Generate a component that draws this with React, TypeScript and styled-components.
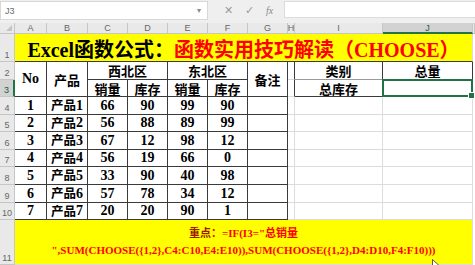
import React from "react";
import styled, { createGlobalStyle } from "styled-components";

const SERIF = `"Liberation Serif", "Noto Sans CJK SC", serif`;
const SANS = `"Liberation Sans", "Noto Sans", sans-serif`;
const DARK = "#3a3a3a";
const GRID = "#dcdcdc";
const HEAD_LINE = "#c6c6c6";
const YELLOW = "#ffff00";
const RED = "#ff0000";
const GREEN = "#217346";

const GlobalStyle = createGlobalStyle`
    html, body {
        margin: 0;
        padding: 0;
        background: #fff;
        overflow: hidden;
    }
`;

const Frame = styled.div`
    width: 475px;
    height: 265px;
    overflow: hidden;
    position: relative;
    display: flex;
    flex-direction: column;
    background: #fff;
`;

const FormulaBar = styled.div`
    height: 23px;
    flex: none;
    display: flex;
    align-items: flex-start;
    background: #efefef;
    box-sizing: border-box;
    padding-top: 1px;
`;

const NameBox = styled.div`
    width: 208px;
    height: 19px;
    box-sizing: border-box;
    background: #fff;
    border: 1px solid #d8d8d8;
    display: flex;
    align-items: center;
    justify-content: space-between;
    padding: 0 6px 0 4px;
    font: 9px ${SANS};
    color: #6a6a6a;
`;

const Caret = styled.span`
    font-size: 8px;
    color: #8a8a8a;
`;

const Tools = styled.div`
    width: 76px;
    height: 19px;
    display: flex;
    align-items: center;
    gap: 12px;
    padding-left: 16px;
    box-sizing: border-box;
    font: 11px ${SANS};
    color: #9a9a9a;
`;

const Fx = styled.span`
    font: italic 10px ${SERIF};
    color: #8a8a8a;
`;

const FormulaInput = styled.div`
    flex: 1;
    height: 17px;
    background: #fff;
    border: 1px solid #dcdcdc;
    border-right: none;
    box-sizing: border-box;
`;

const Sheet = styled.div`
    display: grid;
    grid-template-columns: 15px 32px 41px 40px 40px 40px 40px 40px 7px 88px 90px 1fr;
    grid-template-rows: 11px 28px 18px 17px 18px 17px 18px 17px 18px 18px 17px 45px;
`;

const Corner = styled.div`
    grid-column: 1;
    grid-row: 1;
    background: #e9e9e9;
    border-right: 1px solid ${HEAD_LINE};
    border-bottom: 1px solid ${HEAD_LINE};
    box-sizing: border-box;
    position: relative;

    &::after {
        content: "";
        position: absolute;
        right: 2px;
        bottom: 2px;
        border-left: 6px solid transparent;
        border-bottom: 6px solid #c4c4c4;
    }
`;

const ColHead = styled.div<{ $c: number; $active?: boolean }>`
    grid-column: ${p => p.$c};
    grid-row: 1;
    box-sizing: border-box;
    background: ${p => (p.$active ? "#d2d2d2" : "#e9e9e9")};
    border-right: 1px solid ${HEAD_LINE};
    border-bottom: ${p => (p.$active ? `2px solid ${GREEN}` : `1px solid ${HEAD_LINE}`)};
    display: flex;
    align-items: center;
    justify-content: center;
    font: 9px ${SANS};
    color: ${p => (p.$active ? "#1d5c38" : "#666")};
    overflow: hidden;
`;

const RowHead = styled.div<{ $r: number; $active?: boolean }>`
    grid-column: 1;
    grid-row: ${p => p.$r};
    box-sizing: border-box;
    background: ${p => (p.$active ? "#d2d2d2" : "#e9e9e9")};
    border-right: ${p => (p.$active ? `2px solid ${GREEN}` : `1px solid ${HEAD_LINE}`)};
    border-bottom: 1px solid ${HEAD_LINE};
    display: flex;
    align-items: flex-end;
    justify-content: center;
    padding-bottom: 1px;
    font: 9px ${SANS};
    color: ${p => (p.$active ? "#1d5c38" : "#666")};
`;

const Cell = styled.div<{
    $c: number;
    $r: number;
    $cs?: number;
    $rs?: number;
    $right?: string;
    $bottom?: string;
    $bg?: string;
    $size?: number;
}>`
    grid-column: ${p => p.$c} / span ${p => p.$cs ?? 1};
    grid-row: ${p => p.$r} / span ${p => p.$rs ?? 1};
    box-sizing: border-box;
    border-right: 1px solid ${p => p.$right ?? GRID};
    border-bottom: 1px solid ${p => p.$bottom ?? GRID};
    background: ${p => p.$bg ?? "#fff"};
    display: flex;
    align-items: center;
    justify-content: center;
    font: bold ${p => p.$size ?? 14}px ${SERIF};
    color: #000;
    white-space: nowrap;
    overflow: hidden;
`;

const Cjk = styled.span`
    font-size: 12.5px;
    position: relative;
    top: -1px;
`;

const Selected = styled(Cell)`
    position: relative;
    overflow: visible;

    &::after {
        content: "";
        position: absolute;
        left: -1px;
        top: -1px;
        right: -1px;
        bottom: -1px;
        border: 2px solid ${GREEN};
    }

    &::before {
        content: "";
        position: absolute;
        right: -3px;
        bottom: -3px;
        width: 5px;
        height: 5px;
        background: ${GREEN};
        border: 1px solid #fff;
        z-index: 1;
    }
`;

const Title = styled(Cell)`
    font-size: 20px;
    padding-top: 2px;
`;

const Red = styled.span`
    color: ${RED};
`;

const Note = styled(Cell)`
    align-items: flex-start;
    padding-top: 5px;
    font-size: 11px;
    line-height: 17px;
    text-align: center;
    color: ${RED};
`;

const NoteKey = styled.span`
    color: #9a1c00;
`;

const Cursor = styled.svg`
    position: absolute;
    left: 432px;
    top: 259px;
`;

const letters = ["A", "B", "C", "D", "E", "F", "G", "H", "I", "J", ""];

const data: string[][] = [
    ["1", "1", "66", "90", "99", "90"],
    ["2", "2", "56", "88", "89", "99"],
    ["3", "3", "67", "12", "98", "12"],
    ["4", "4", "56", "19", "66", "0"],
    ["5", "5", "33", "90", "40", "98"],
    ["6", "6", "57", "78", "34", "12"],
    ["7", "7", "20", "20", "90", "1"],
];

export default function App() {
    // sheet row n lives on grid row n + 1, column A on grid column 2
    return (
        <Frame>
            <GlobalStyle />
            <FormulaBar>
                <NameBox>
                    <span>J3</span>
                    <Caret>▾</Caret>
                </NameBox>
                <Tools>
                    <span>✕</span>
                    <span>✓</span>
                    <Fx>fx</Fx>
                </Tools>
                <FormulaInput />
            </FormulaBar>

            <Sheet>
                <Corner />
                {letters.map((l, i) => (
                    <ColHead key={i} $c={i + 2} $active={l === "J"}>
                        {l}
                    </ColHead>
                ))}
                {Array.from({ length: 11 }, (_, i) => (
                    <RowHead key={i} $r={i + 2} $active={i === 2}>
                        {i + 1}
                    </RowHead>
                ))}

                <Title $c={2} $r={2} $cs={10} $bg={YELLOW} $bottom={DARK} $right={GRID}>
                    Excel函数公式：<Red>函数实用技巧解读（CHOOSE）</Red>
                </Title>

                <Cell $c={2} $r={3} $rs={2} $right={DARK} $bottom={DARK}>
                    No
                </Cell>
                <Cell $c={3} $r={3} $rs={2} $right={DARK} $bottom={DARK} $size={13}>
                    产品
                </Cell>
                <Cell $c={4} $r={3} $cs={2} $right={DARK} $bottom={DARK} $size={13}>
                    西北区
                </Cell>
                <Cell $c={6} $r={3} $cs={2} $right={DARK} $bottom={DARK} $size={13}>
                    东北区
                </Cell>
                <Cell $c={8} $r={3} $rs={2} $right={DARK} $bottom={DARK} $size={13}>
                    备注
                </Cell>
                {["销量", "库存", "销量", "库存"].map((t, i) => (
                    <Cell key={i} $c={4 + i} $r={4} $right={DARK} $bottom={DARK} $size={13}>
                        {t}
                    </Cell>
                ))}

                {data.map((row, r) =>
                    [...row, ""].map((v, c) => (
                        <Cell key={`${r}-${c}`} $c={2 + c} $r={5 + r} $right={DARK} $bottom={DARK}>
                            {c === 1 && <Cjk>产品</Cjk>}
                            {v}
                        </Cell>
                    ))
                )}

                {Array.from({ length: 9 }, (_, i) => (
                    <Cell key={`h${i}`} $c={9} $r={3 + i} $right={i < 2 ? DARK : GRID} />
                ))}

                <Cell $c={10} $r={3} $right={DARK} $bottom="#9a9a9a" $size={13}>
                    类别
                </Cell>
                <Cell $c={11} $r={3} $right={DARK} $bottom="#9a9a9a" $size={13}>
                    总量
                </Cell>
                <Cell $c={10} $r={4} $right={DARK} $bottom={DARK} $size={13}>
                    总库存
                </Cell>
                <Selected $c={11} $r={4} $right={DARK} $bottom={DARK} />

                {Array.from({ length: 7 }, (_, i) => (
                    <React.Fragment key={`ij${i}`}>
                        <Cell $c={10} $r={5 + i} />
                        <Cell $c={11} $r={5 + i} />
                    </React.Fragment>
                ))}

                <Note $c={2} $r={12} $cs={10} $bg={YELLOW}>
                    <div>
                        <NoteKey>重点</NoteKey>：=IF(I3="总销量
                        <br />
                        ",SUM(CHOOSE({"{"}1,2{"}"},C4:C10,E4:E10)),SUM(CHOOSE({"{"}1,2{"}"},D4:D10,F4:F10)))
                    </div>
                </Note>
            </Sheet>

            <Cursor width="8" height="10" viewBox="0 0 8 10">
                <path d="M0.5 0.5 L0.5 9 L2.6 7 L4 9.8 L5.3 9.2 L4 6.5 L7 6.5 Z" fill="#fff" stroke="#333" strokeWidth="0.8" />
            </Cursor>
        </Frame>
    );
}
